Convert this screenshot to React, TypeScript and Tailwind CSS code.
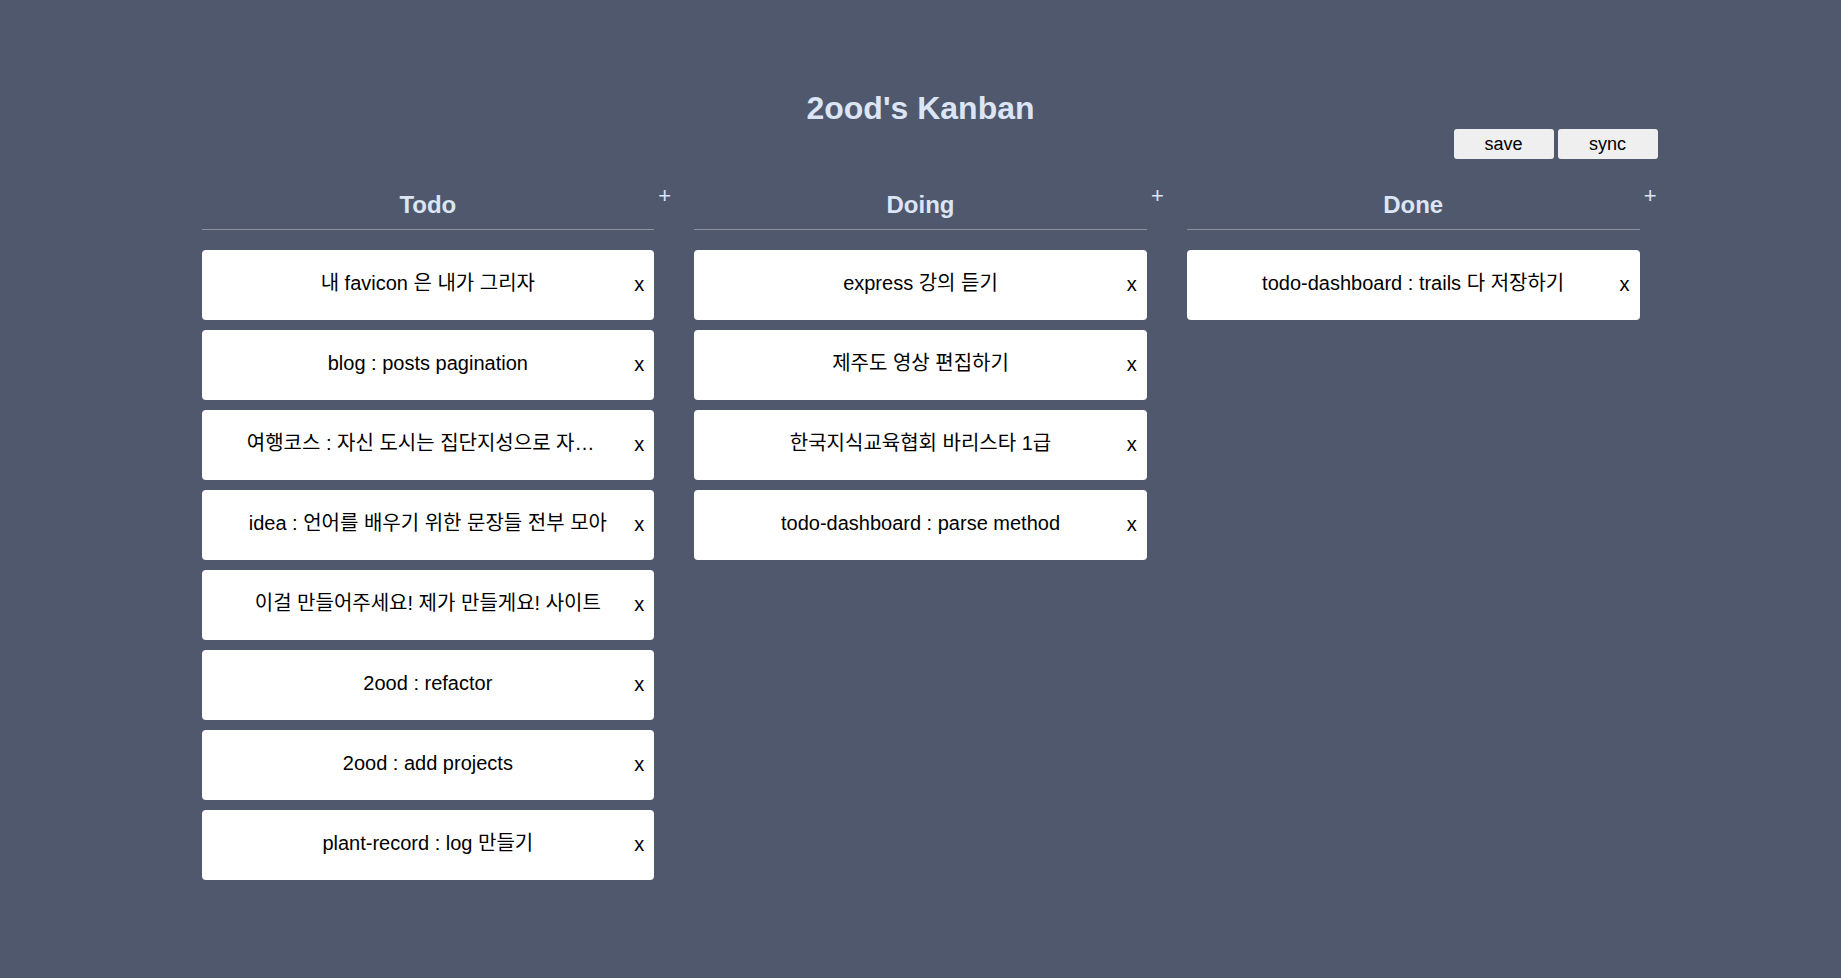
import React from 'react';

type Column = {
  title: string;
  cards: string[];
};

const columns: Column[] = [
  {
    title: 'Todo',
    cards: [
      '내 favicon 은 내가 그리자',
      'blog : posts pagination',
      '여행코스 : 자신 도시는 집단지성으로 자랑하기',
      'idea : 언어를 배우기 위한 문장들 전부 모아',
      '이걸 만들어주세요! 제가 만들게요! 사이트',
      '2ood : refactor',
      '2ood : add projects',
      'plant-record : log 만들기'
    ]
  },
  {
    title: 'Doing',
    cards: ['express 강의 듣기', '제주도 영상 편집하기', '한국지식교육협회 바리스타 1급', 'todo-dashboard : parse method']
  },
  {
    title: 'Done',
    cards: ['todo-dashboard : trails 다 저장하기']
  }
];

function Card({ text }: { text: string }) {
  return (
    <div className="relative flex h-[70px] items-center rounded-[4px] bg-white pb-[4px]">
      <div className="mx-auto w-4/5 truncate text-center text-[20px] leading-[24px] text-black">{text}</div>
      <button className="absolute right-[10px] top-1/2 -translate-y-1/2 pb-[2px] text-[20px] leading-[24px] text-black">
        x
      </button>
    </div>
  );
}

function KanbanColumn({ column }: { column: Column }) {
  return (
    <div className="relative w-[453px]">
      <div className="border-b border-[#8b909b] pb-[10px] text-center text-[24px] font-bold leading-[28px] text-[#dce5f5]">
        {column.title}
      </div>
      <button className="absolute -right-[17px] -top-[6px] text-[22px] leading-[22px] text-[#dce5f5]">+</button>
      <div className="mt-[20px] flex flex-col gap-[10px]">
        {column.cards.map((c) => (
          <Card key={c} text={c} />
        ))}
      </div>
    </div>
  );
}

export default function App() {
  return (
    <div className="min-h-screen bg-[#4f586c] font-['Liberation_Sans','Noto_Sans_CJK_KR',sans-serif]">
      <div className="mx-auto w-[1438px] pt-[90px] pb-[40px]">
        <h1 className="text-center text-[32px] font-bold leading-[37px] text-[#dce5f5]">2ood's Kanban</h1>

        <div className="-mr-[18px] mt-[2px] flex justify-end gap-[4px]">
          <button className="h-[30px] w-[100px] rounded-[3px] bg-[#efefef] text-[18px] text-black">save</button>
          <button className="h-[30px] w-[100px] rounded-[3px] bg-[#efefef] text-[18px] text-black">sync</button>
        </div>

        <div className="mt-[32px] flex gap-[40px]">
          {columns.map((col) => (
            <KanbanColumn key={col.title} column={col} />
          ))}
        </div>
      </div>
    </div>
  );
}
